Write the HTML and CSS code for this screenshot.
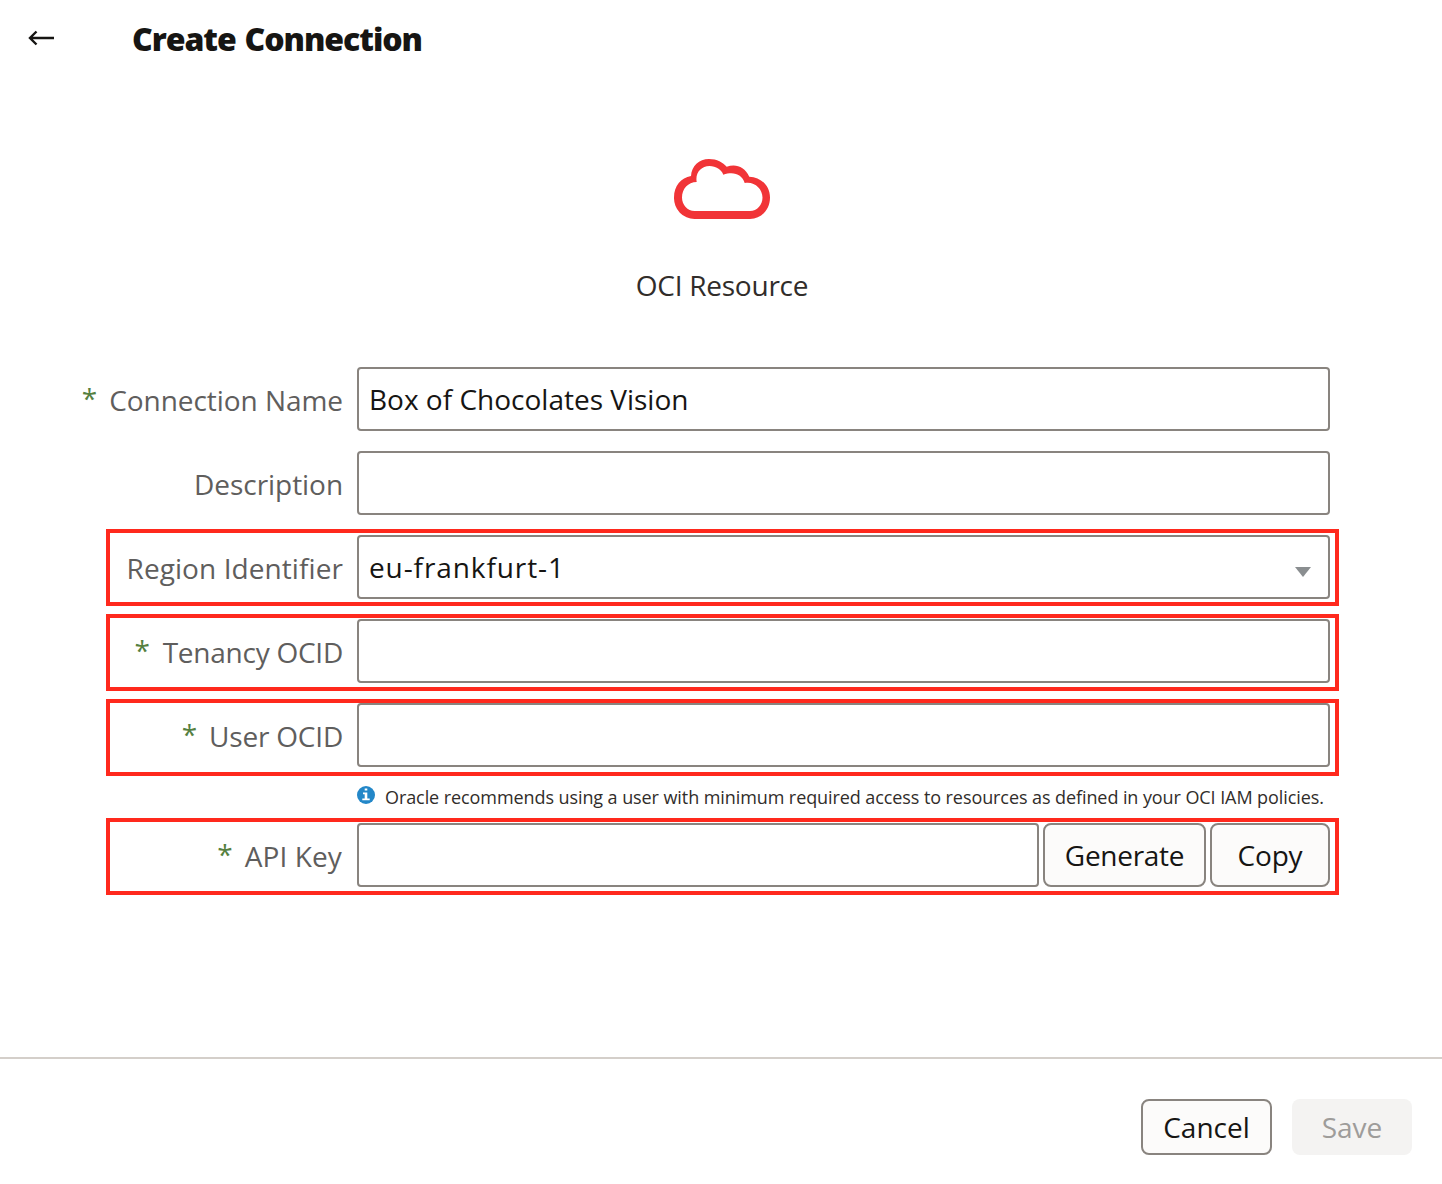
FILE: index.html
```html
<!DOCTYPE html>
<html lang="en">
<head>
<meta charset="utf-8">
<title>Create Connection</title>
<link rel="stylesheet" href="styles.css">
</head>
<body>
<header class="header">
  <svg class="back" width="28" height="18" viewBox="0 0 28 18" fill="none" stroke="#161513" stroke-width="2.4"><path d="M26 9H2.200M8.500 2.500L2 9l6.500 6.500"/></svg>
  <h1 class="title">Create Connection</h1>
</header>
<main class="main">
  <section class="resource">
    <svg class="cloud" width="96" height="60" viewBox="0 0 96 60"><path fill="#f13437" fill-rule="evenodd" d="M20.5 60A20.5 21 0 0 1 0 38.500C0 27 7 18.800 17 17C17.500 7 25 0 35 0C43 0 49 3.500 52.700 7.800C61 4.500 70.500 7 75.300 17.700C87 18 96 27 96 38.500C96 50.500 87.500 60 76 60ZM20.500 52H76C83 52 88.500 46 88.500 38.500C88.500 29.500 80 22 70.700 24C68 15.500 60 12 49.300 15.700C47.500 10.500 42 7 35.500 7C27 7 21 14 22.700 23C14 23 8 30 8 38.500C8 46 13.500 52 20.500 52Z"/></svg>
    <p class="resource-name">OCI Resource</p>
  </section>
  <form class="form">
    <div class="row">
      <label class="label"><i>*</i><span>Connection Name</span></label>
      <div class="field">Box of Chocolates Vision</div>
    </div>
    <div class="row row-description">
      <label class="label"><span>Description</span></label>
      <div class="field"></div>
    </div>
    <div class="row marked row-region">
      <label class="label"><span>Region Identifier</span></label>
      <div class="field select"><span>eu-frankfurt-1</span><b class="caret"></b></div>
    </div>
    <div class="row marked row-tenancy">
      <label class="label"><i>*</i><span>Tenancy OCID</span></label>
      <div class="field"></div>
    </div>
    <div class="row marked row-user">
      <label class="label"><i>*</i><span>User OCID</span></label>
      <div class="field"></div>
    </div>
    <p class="note"><svg width="18" height="18" viewBox="0 0 18 18"><circle cx="9" cy="9" r="9" fill="#2387c8"/><path fill="#fff" d="M7.700 2.400h2.600v2.200H7.700zM6 6.500h4.300v6h2.400v1.800H5.300v-1.800h2.400V8.300H6z"/></svg><span>Oracle recommends using a user with minimum required access to resources as defined in your OCI IAM policies.</span></p>
    <div class="row marked row-key">
      <label class="label"><i>*</i><span>API Key</span></label>
      <div class="field"></div>
      <button type="button" class="button generate">Generate</button>
      <button type="button" class="button copy">Copy</button>
    </div>
  </form>
</main>
<footer class="footer">
  <button type="button" class="button cancel">Cancel</button>
  <button type="button" class="button save" disabled>Save</button>
</footer>
</body>
</html>
```
FILE: styles.css
```css
* { box-sizing: border-box; }
body { margin: 0; width: 1442px; height: 1184px; display: flex; flex-direction: column; background: #fff; color: #161513; font: 28px/40px "Open Sans", sans-serif; }
.header { height: 80px; display: flex; align-items: flex-start; padding: 19px 28px; }
.back { margin-top: 10px; }
.title { margin: 0 0 0 76px; font-size: 32px; font-weight: 800; line-height: 40px; letter-spacing: -1.05px; word-spacing: 1.5px; }
.main { flex: 1; }
.resource { display: flex; flex-direction: column; align-items: center; padding: 79px 0 0 2px; height: 287px; color: #312d2a; }
.cloud { display: block; }
.resource-name { margin: 46px 0 0; letter-spacing: -0.25px; }
.form { display: flex; flex-direction: column; padding: 0 103px 0 106px; }
.row { display: flex; padding: 0 9px 0 0; }
.row-description { margin-top: 20px; }
.label { flex: none; width: 251px; height: 64px; padding: 13px 14px 0 0; display: flex; justify-content: flex-end; color: #5f5e5d; white-space: nowrap; letter-spacing: -0.05px; }
.label i { font-style: normal; color: #55803f; margin: -2px 12px 0 0; }
.field { flex: 1; height: 64px; border: 2px solid #89847f; border-radius: 4px; background: #fff; padding: 10px 10px 0; }
.select { display: flex; justify-content: space-between; padding-right: 17px; letter-spacing: 0.9px; }
.caret { width: 0; height: 0; border: solid transparent; border-width: 10px 8px 0; border-top-color: #8a8e90; margin-top: 20px; }
.marked { height: 77px; border: 4px solid #ff291d; padding-right: 5px; }
.marked .label { width: 247px; }
.row-region { margin-top: 14px; padding-top: 2px; }
.row-region .label { letter-spacing: 0.08px; }
.row-tenancy { margin-top: 8px; padding-top: 1px; }
.row-tenancy .label { letter-spacing: -0.25px; }
.row-tenancy .label i { margin-right: 13px; }
.row-user { margin-top: 8px; }
.row-user .label { letter-spacing: -0.2px; }
.row-key { padding-top: 1px; }
.row-key .label { padding-right: 15px; letter-spacing: 0.1px; }
.note { height: 42px; margin: 0 0 0 251px; display: flex; font-size: 18px; line-height: 24px; color: #312d2a; white-space: nowrap; padding-top: 9px; letter-spacing: -0.083px; }
.note svg { flex: none; margin: 1px 10px 0 0; }
.button { font: inherit; color: #161513; border: 2px solid #89847f; border-radius: 8px; background: #fcfbfa; padding: 0; }
.generate { width: 163px; height: 64px; margin-left: 4px; letter-spacing: -0.3px; }
.copy { width: 120px; height: 64px; margin-left: 4px; letter-spacing: -0.2px; }
.footer { height: 127px; border-top: 2px solid #d4cfca; display: flex; justify-content: flex-end; gap: 20px; padding: 40px 30px 0 0; }
.cancel { width: 131px; height: 56px; }
.save { width: 120px; height: 56px; border: 0; background: #f4f3f2; color: #9e9c9a; }
```
